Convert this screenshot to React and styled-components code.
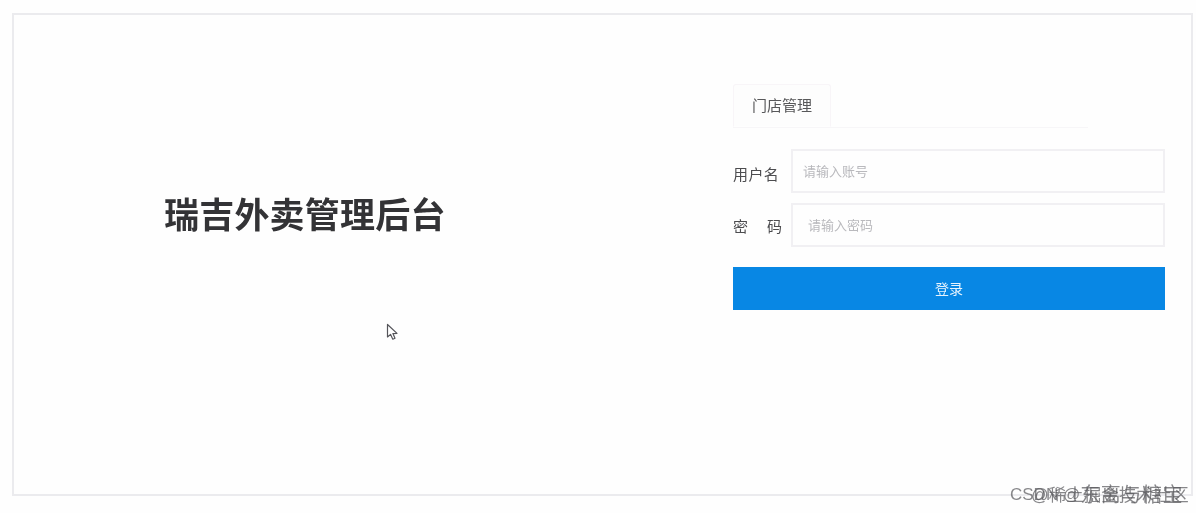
import React from 'react';
import styled, { createGlobalStyle } from 'styled-components';

const GlobalStyle = createGlobalStyle`
  html, body {
    margin: 0;
    padding: 0;
    background: #fefefe;
  }
  body {
    font-family: "Liberation Sans", "Noto Sans CJK SC", sans-serif;
  }
`;

const Page = styled.div`
  position: relative;
  width: 1196px;
  height: 513px;
  padding: 13px 3px 17px 12px;
  box-sizing: border-box;
  overflow: hidden;
`;

const Frame = styled.div`
  box-sizing: border-box;
  height: 483px;
  border: 2px solid #ebebee;
  background: #fefefe;
  display: flex;
  filter: blur(0.35px);
`;

const Brand = styled.div`
  width: 719px;
  padding: 178px 0 0 150px;
  box-sizing: border-box;
`;

const Title = styled.h1`
  margin: 0;
  font-size: 35px;
  line-height: 46px;
  font-weight: 700;
  color: #333336;
  letter-spacing: 0.2px;
`;

const Panel = styled.div`
  width: 432px;
  padding-top: 69px;
  display: flex;
  flex-direction: column;
`;

const Tabs = styled.div`
  width: 355px;
  height: 44px;
  box-sizing: border-box;
  border-bottom: 1px solid #f7f6f8;
  display: flex;
  margin-bottom: 21px;
`;

const Tab = styled.div`
  width: 98px;
  box-sizing: border-box;
  border: 1px solid #f8f5f8;
  border-bottom-color: #fefefe;
  border-radius: 3px 3px 0 0;
  font-size: 15px;
  line-height: 41px;
  color: #58585a;
  text-align: center;
  background: #fdfdfd;
`;

const Row = styled.div`
  display: flex;
  align-items: center;
  height: 44px;
  margin-bottom: 10px;
`;

const Label = styled.label`
  width: 58px;
  flex: none;
  font-size: 15px;
  line-height: 44px;
  color: #4c4c4f;
  padding-top: ${(p) => p.$drop}px;
  letter-spacing: ${(p) => p.$spread}px;
  white-space: nowrap;
`;

const Input = styled.input`
  flex: 1;
  min-width: 0;
  height: 44px;
  box-sizing: border-box;
  border: 2px solid #f1f0f3;
  border-radius: 0;
  background: #fefefe;
  outline: none;
  padding: 0 0 0 ${(p) => p.$inset}px;
  font-family: inherit;
  font-size: 13px;
  &::placeholder {
    color: #b9b9bd;
    opacity: 1;
  }
`;

const SubmitButton = styled.button`
  height: 43px;
  margin-top: 10px;
  border: none;
  border-radius: 0;
  background: #0887e4;
  color: #e6f3fd;
  font-family: inherit;
  font-size: 14px;
  padding: 0 0 2px;
`;

const Cursor = styled.svg`
  position: absolute;
  left: 386px;
  top: 323px;
  width: 13px;
  height: 18px;
`;

const Watermark = styled.div`
  position: absolute;
  top: ${(p) => p.$top}px;
  left: ${(p) => p.$left}px;
  font-size: ${(p) => p.$size}px;
  line-height: 20px;
  color: #56565a;
  opacity: ${(p) => p.$fade};
  white-space: nowrap;
`;

const Handle = styled.span`
  font-size: 20px;
  letter-spacing: 0.6px;
  vertical-align: -2px;
`;

export default function App() {
  return (
    <>
      <GlobalStyle />
      <Page>
        <Frame>
          <Brand>
            <Title>瑞吉外卖管理后台</Title>
          </Brand>
          <Panel>
            <Tabs>
              <Tab>门店管理</Tab>
            </Tabs>
            <Row>
              <Label htmlFor="username" $drop={7} $spread={0.4}>用户名</Label>
              <Input id="username" $inset={10} placeholder="请输入账号" />
            </Row>
            <Row>
              <Label htmlFor="password" $drop={3} $spread={19}>密码</Label>
              <Input id="password" $inset={15} placeholder="请输入密码" />
            </Row>
            <SubmitButton type="button">登录</SubmitButton>
          </Panel>
        </Frame>
        <Cursor viewBox="0 0 13 18">
          <path
            d="M1.5 1.5 L1.5 14 L4.6 11.4 L6.8 16.2 L9 15.2 L6.9 10.6 L11 10.4 Z"
            fill="#fff"
            stroke="#55555a"
            strokeWidth="1.2"
            strokeLinejoin="round"
          />
        </Cursor>
        <Watermark $top={485} $left={1010} $size={17} $fade={0.7}>CSDN @<Handle>东离与糖宝</Handle></Watermark>
        <Watermark $top={485} $left={1031} $size={17.5} $fade={0.7}>@稀土掘金技术社区</Watermark>
      </Page>
    </>
  );
}
